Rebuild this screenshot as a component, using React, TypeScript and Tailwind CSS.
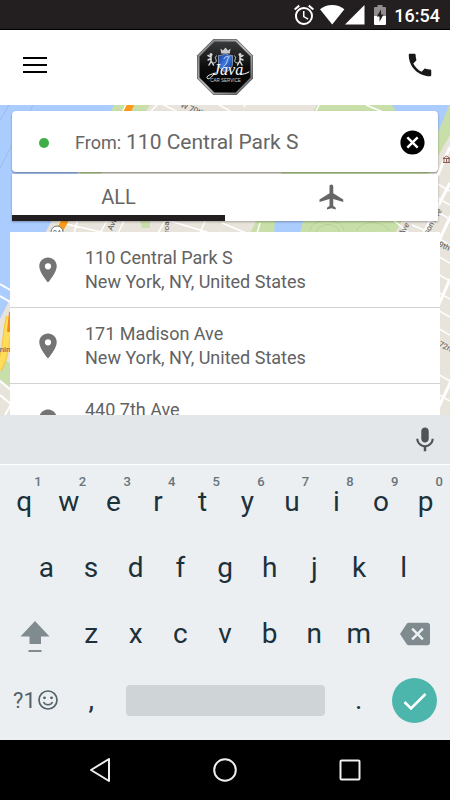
import { useState } from "react";
import {
  MdAlarm,
  MdBackspace,
  MdCancel,
  MdFlight,
  MdMic,
  MdPhone,
  MdPlace,
} from "react-icons/md";

const places = [
  { street: "110 Central Park S", city: "New York, NY, United States" },
  { street: "171 Madison Ave", city: "New York, NY, United States" },
  { street: "440 7th Ave", city: "New York, NY, United States" },
];

const topRow = ["q", "w", "e", "r", "t", "y", "u", "i", "o", "p"];
const middleRow = ["a", "s", "d", "f", "g", "h", "j", "k", "l"];
const bottomRow = ["z", "x", "c", "v", "b", "n", "m"];

function StatusBar() {
  return (
    <div className="flex h-[30px] shrink-0 items-center justify-end border-b border-black bg-[#231f20] pr-[10px] text-white">
      <MdAlarm size={24} className="mr-1" />
      <svg width="45" height="20" viewBox="0 0 45 20" fill="currentColor" className="mr-[9px]" aria-hidden="true">
        <path d="M0 4.2C3.4 1.6 7.6 0 12.2 0s8.800 1.600 12.200 4.200L12.200 19.500z" />
        <path d="M44.500 0v19.500H25z" />
      </svg>
      <svg width="12" height="20" viewBox="0 0 12 20" className="mr-2" aria-hidden="true">
        <path d="M1 2h2.500V0h5v2H11a1 1 0 0 1 1 1v8H0V3a1 1 0 0 1 1-1z" fill="#8f8d8e" />
        <path d="M0 11h12v8a1 1 0 0 1-1 1H1a1 1 0 0 1-1-1z" fill="#fff" />
        <path d="M7 4.500 2.800 11.500h2.700v5.200l4-7.200H7z" fill="#231f20" />
      </svg>
      <span className="pt-[3px] text-lg leading-none font-medium">16:54</span>
    </div>
  );
}

function Lion() {
  return (
    <g fill="none" stroke="#d9dadb" strokeLinecap="round">
      <path d="M4 3.500v6M4 5 1 3.500M4 6.500 1 8M4 9.500 2 13M4.500 9.500 6.500 13" strokeWidth="1.500" />
      <path d="M6.500 11c3 0 3-2 2.500-3.500S7.500 5 9.500 4" strokeWidth="1" />
      <circle cx="4" cy="2.500" r="1.500" fill="#d9dadb" stroke="none" />
    </g>
  );
}

function Logo() {
  return (
    <svg width="58" height="58" viewBox="0 0 58 58" role="img" aria-label="Java Car Service">
      <defs>
        <linearGradient id="rim" x1="0" y1="0" x2="1" y2="1">
          <stop offset="0" stopColor="#77797b" />
          <stop offset="0.5" stopColor="#b5b7b9" />
          <stop offset="1" stopColor="#5b5d5f" />
        </linearGradient>
        <linearGradient id="gloss" x1="0" y1="0" x2="0" y2="1">
          <stop offset="0" stopColor="#3b3c3e" />
          <stop offset="0.500" stopColor="#0c0c0c" />
          <stop offset="1" stopColor="#000" />
        </linearGradient>
        <linearGradient id="shield" x1="0" y1="0" x2="1" y2="1">
          <stop offset="0" stopColor="#173b9c" />
          <stop offset="0.500" stopColor="#3d78dd" />
          <stop offset="1" stopColor="#0c2369" />
        </linearGradient>
      </defs>
      <path d="M17.500 1h23L57 17.500v23L40.500 57h-23L1 40.500v-23z" fill="#4b4d4f" />
      <path d="M18 2.500h22L55.500 18v22L40 55.500H18L2.500 40V18z" fill="url(#gloss)" stroke="url(#rim)" strokeWidth="2" />
      <path d="M22.500 17.500c4 0 5-1 7-2 2 1 3 2 7 2v8c0 4.500-3.500 7-7 9-3.500-2-7-4.500-7-9z" fill="url(#shield)" stroke="#a9b4c7" strokeWidth="0.700" />
      <path d="m24.500 10.500 2.500 2 2.500-3 2.500 3 2.500-2-.700 5h-8.600z" fill="#c8c9ca" />
      <path d="M32 18.500c-2.500 0-4 1-4 2.500M33.500 18c-2.500 2-2 9-6 10" fill="none" stroke="#c7d6f5" strokeWidth="1" />
      <g transform="translate(11 14)">
        <Lion />
      </g>
      <g transform="translate(48 14) scale(-1 1)">
        <Lion />
      </g>
      <text x="17" y="37" fill="#fff" fontFamily="'Liberation Serif', serif" fontStyle="italic" fontSize="16">
        Java
      </text>
      <path d="M18 36c-3 4-6 6-7 4s4-4 9-5M44 36c3 .8 6-.5 9-2" fill="none" stroke="#fff" strokeWidth="1" strokeLinecap="round" />
      <text x="29.500" y="43.500" fill="#d0d1d2" textAnchor="middle" fontFamily="'Liberation Sans', sans-serif" fontSize="4.500">
        CAR SERVICE
      </text>
    </svg>
  );
}

function Header() {
  return (
    <header className="grid h-[75px] shrink-0 grid-cols-3 items-start bg-white text-[#1a1718]">
      <button type="button" aria-label="Menu" className="ml-[23px] flex h-[69px] items-center justify-self-start text-black">
        <svg width="24" height="16" viewBox="0 0 24 16" stroke="currentColor" strokeWidth="2">
          <path d="M0 1h24M0 8h24M0 15h24" />
        </svg>
      </button>
      <div className="mt-2 justify-self-center">
        <Logo />
      </div>
      <a href="tel:" aria-label="Call" className="mr-[15px] flex h-[69px] items-center justify-self-end">
        <MdPhone size={30} />
      </a>
    </header>
  );
}

function MapBackground() {
  return (
    <svg
      className="absolute inset-0 h-full w-full"
      viewBox="0 0 450 310"
      preserveAspectRatio="xMidYMin slice"
      aria-hidden="true"
    >
      <rect width="450" height="310" fill="#e8e4dc" />
      {/* river */}
      <path d="M0 0h120L82 60 50 119 12 190 0 214z" fill="#abccff" />
      <path d="M9 0-4 22M33 0-10 82" stroke="#94afd8" strokeWidth="0.600" fill="none" />
      {/* parks */}
      <path d="M114 0h36L100 70 70 116H56z" fill="#c8dfa9" />
      <path d="M317 0h133v30L395 128H250z" fill="#c8dfa9" />
      <path d="M140 115h10v8h-8zM0 252l10 6v24l-10-8z" fill="#c8dfa9" />
      <path d="M392 0h57l-7 18-9 20-33-26z" fill="#abccff" />
      <path d="M275 116h28l-3 12h-26z" fill="#abccff" />
      <path d="M310 126c0-14 34-14 34 0M316 127c4-10 20-10 24 0M356 126c8-14 30-8 34 0" stroke="#b5cb9b" strokeWidth="0.800" fill="none" />
      {/* streets */}
      <g stroke="#fff" strokeWidth="1.500" fill="none">
        <path d="m147 10 12-12M160-2l24 12M216-2l14 8M243 2l10-8M366 0l22 9M316 6l4-8" />
        <path d="m74 128 4-14M100 128l8-14M118 128l7-14M158 128l8-14M200 128l6-14M66 119l44 10M170 116l40 12M222 118l34 14M392 114l22 18M256 132l4-14M412 120l24 10" />
        <path d="m0 179 12 7M0 191l12 7M0 276l12 10M0 290l12 10M5 310l8-14" strokeWidth="2" />
        <path d="m436 78 14 8M436 92l14 8M436 106l14 8M436 132l14 8M436 150l14 8M436 168l14 8M436 186l14 8M436 204l14 8M436 222l14 8M436 268l14 8M436 288l14 8" />
        <path d="m436 74 14-32M436 142l16-34M436 206l14-32M436 308l16-34M424 128l26-50" strokeWidth="3" />
      </g>
      <path d="m130-1-6 12M67 112l-10 18" stroke="#fff" strokeWidth="8" />
      <path d="m131-1-6 12M67 112l-10 18" stroke="#fb9a1b" strokeWidth="7" />
      <path d="M10 212c-5 16-2 36-12 52" stroke="#f2c640" strokeWidth="8" fill="none" />
      <path d="M10 212c-5 16-2 36-12 52" stroke="#ffdc5a" strokeWidth="6" fill="none" />
      <path d="m11 207-2 20" stroke="#f68a11" strokeWidth="4" />
      <circle cx="57" cy="127" r="6" fill="#fff" stroke="#777" />
      <g fill="#555" fontFamily="Roboto, sans-serif" fontSize="8">
        <text x="-3" y="247">min</text>
        <text x="53" y="130" fontSize="7">9A</text>
        <text transform="translate(180 2) rotate(22)">W 70th</text>
        <text transform="translate(112 126) rotate(-65)">Ave</text>
        <text transform="translate(169 133) rotate(-90)">Broadway</text>
        <text transform="translate(403 131) rotate(-60)">Ave</text>
        <text transform="translate(428 130) rotate(-60)">son Ave</text>
        <text transform="translate(438 141) rotate(25)">9th</text>
        <text transform="translate(438 241) rotate(25)">72nd</text>
      </g>
      <path d="M443 53.500 446.500 51l3.500 2.500zM444 54v3M446.500 54v3M449 54v3M443 57.500h8" stroke="#8d5f57" fill="none" />
    </svg>
  );
}

function SearchCard() {
  const [tab, setTab] = useState("all");
  const [from, setFrom] = useState("110 Central Park S");

  return (
    <div className="mx-3 flex flex-col gap-[2px]">
      <div className="flex h-[61px] items-center rounded-sm bg-white pt-[2px] pr-[11px] pl-[27px] text-[#666] shadow-[0_1px_2px_rgba(0,0,0,0.4)]">
        <span className="mr-[26px] size-[10px] shrink-0 rounded-full bg-[#3fae49]" />
        <label htmlFor="from" className="mr-[5px] text-lg">
          From:
        </label>
        <input
          id="from"
          value={from}
          onChange={(e) => setFrom(e.target.value)}
          className="min-w-0 flex-1 text-[21px] outline-none"
        />
        <button type="button" aria-label="Clear" onClick={() => setFrom("")} className="text-black">
          <MdCancel size={29} />
        </button>
      </div>
      <div className="grid h-[47px] grid-cols-2 bg-white text-[#666] shadow-[0_1px_2px_rgba(0,0,0,0.3)]">
        <button
          type="button"
          onClick={() => setTab("all")}
          className={`border-b-[6px] pt-1 text-xl ${tab === "all" ? "border-[#231f20]" : "border-transparent"}`}
        >
          ALL
        </button>
        <button
          type="button"
          aria-label="Airports"
          onClick={() => setTab("airports")}
          className={`flex items-center justify-center border-b-[6px] pt-1 ${tab === "airports" ? "border-[#231f20]" : "border-transparent"}`}
        >
          <MdFlight size={30} />
        </button>
      </div>
    </div>
  );
}

function PlaceList() {
  return (
    <ul className="mx-[10px] mt-[11px] bg-white">
      {places.map((place) => (
        <li key={place.street} className="border-b border-[#d2d2d2]">
          <button type="button" className="flex h-[75px] w-full items-center pl-[23px] text-left">
            <MdPlace size={30} className="mr-[22px] shrink-0 text-[#747474]" />
            <span className="text-lg leading-6 text-[#626262]">
              <span className="block">{place.street}</span>
              <span className="block">{place.city}</span>
            </span>
          </button>
        </li>
      ))}
    </ul>
  );
}

function Key({ label, hint }: { label: string; hint?: string }) {
  return (
    <button type="button" className="relative flex-2 text-[28px]">
      {label}
      {hint && (
        <span className="absolute top-[3px] right-[5px] text-[13px] font-medium text-[#67757b]">{hint}</span>
      )}
    </button>
  );
}

function Keyboard() {
  return (
    <div className="shrink-0 bg-[#ebeff2] text-[#1c313a]">
      <div className="flex h-[49px] items-center justify-end bg-[#e3e7ea] pr-[10px]">
        <button type="button" aria-label="Voice input" className="text-[#505355]">
          <MdMic size={30} />
        </button>
      </div>
      <div className="border-t border-white px-[2px] pt-1 pb-[7px]">
        <div className="flex h-[66px]">
          {topRow.map((label, i) => (
            <Key key={label} label={label} hint={String((i + 1) % 10)} />
          ))}
        </div>
        <div className="flex h-[66px] px-[22px]">
          {middleRow.map((label) => (
            <Key key={label} label={label} />
          ))}
        </div>
        <div className="flex h-[66px]">
          <button type="button" aria-label="Shift" className="flex flex-3 items-center justify-center text-[#7f8b8f]">
            <svg width="30" height="36" viewBox="0 0 30 36" fill="currentColor">
              <path d="M15 5 29.500 20.500H21V28H9.500v-7.500H.5z" />
              <path d="M8.500 34h13v2h-13z" />
            </svg>
          </button>
          {bottomRow.map((label) => (
            <Key key={label} label={label} />
          ))}
          <button type="button" aria-label="Backspace" className="flex flex-3 items-center justify-center text-[#7f8b8f]">
            <MdBackspace size={30} />
          </button>
        </div>
        <div className="flex h-[66px] items-stretch">
          <button type="button" className="flex flex-3 items-center justify-center gap-[2px] text-[22px] text-[#546269]">
            ?1
            <svg width="20" height="20" viewBox="0 0 20 20" fill="none" stroke="currentColor" aria-hidden="true">
              <circle cx="10" cy="10" r="9" strokeWidth="1.700" />
              <path d="M5.500 12c1.700 3.700 7.300 3.700 9 0" strokeWidth="1.500" />
              <circle cx="6.500" cy="7.800" r="1.400" fill="currentColor" stroke="none" />
              <circle cx="13.500" cy="7.800" r="1.400" fill="currentColor" stroke="none" />
            </svg>
          </button>
          <Key label="," />
          <button type="button" aria-label="Space" className="flex flex-10 items-center">
            <span className="mx-3 h-[31px] flex-1 rounded-sm bg-[#cfd4d7]" />
          </button>
          <Key label="." />
          <button type="button" aria-label="Done" className="flex flex-3 items-center justify-center">
            <svg width="45" height="45" viewBox="0 0 45 45">
              <circle cx="22.500" cy="22.500" r="22.500" fill="#4db6ac" />
              <path d="m12.500 24 6.500 6.500L33.500 16" fill="none" stroke="#fff" strokeWidth="2.500" />
            </svg>
          </button>
        </div>
      </div>
    </div>
  );
}

function NavBar() {
  return (
    <nav className="grid h-[60px] shrink-0 grid-cols-3 justify-items-center bg-black px-[38px]">
      <button type="button" aria-label="Back">
        <svg width="24" height="24" viewBox="0 0 24 24" fill="none" stroke="#eee" strokeWidth="2" strokeLinejoin="round">
          <path d="M21 1v22L3 12z" />
        </svg>
      </button>
      <button type="button" aria-label="Home">
        <svg width="24" height="24" viewBox="0 0 24 24" fill="none" stroke="#eee" strokeWidth="2">
          <circle cx="12" cy="12" r="10.800" />
        </svg>
      </button>
      <button type="button" aria-label="Recent apps">
        <svg width="24" height="24" viewBox="0 0 24 24" fill="none" stroke="#eee" strokeWidth="2">
          <rect x="2.500" y="2.500" width="19" height="19" rx="1" />
        </svg>
      </button>
    </nav>
  );
}

export default function App() {
  return (
    <div className="flex h-screen flex-col overflow-hidden bg-white font-[Roboto,sans-serif]">
      <StatusBar />
      <Header />
      <main className="relative min-h-0 flex-1 overflow-hidden">
        <MapBackground />
        <div className="relative pt-[6px]">
          <SearchCard />
          <PlaceList />
        </div>
      </main>
      <Keyboard />
      <NavBar />
    </div>
  );
}
